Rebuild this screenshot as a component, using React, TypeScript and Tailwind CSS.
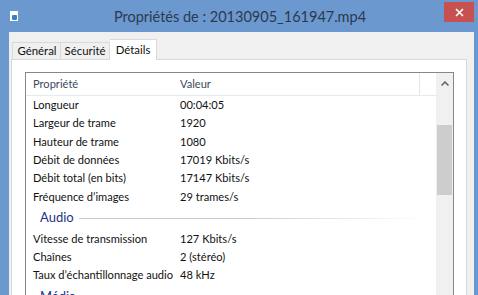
import React from 'react';

const font = { fontFamily: 'Lato, "Open Sans", sans-serif' };

interface Row {
  label: string;
  value: string;
}

const video: Row[] = [
  { label: 'Longueur', value: '00:04:05' },
  { label: 'Largeur de trame', value: '1920' },
  { label: 'Hauteur de trame', value: '1080' },
  { label: 'Débit de données', value: '17019 Kbits/s' },
  { label: 'Débit total (en bits)', value: '17147 Kbits/s' },
  { label: 'Fréquence d’images', value: '29 trames/s' },
];

const audio: Row[] = [
  { label: 'Vitesse de transmission', value: '127 Kbits/s' },
  { label: 'Chaînes', value: '2 (stéréo)' },
  { label: 'Taux d’échantillonnage audio', value: '48 kHz' },
];

const PropRow: React.FC<Row> = ({ label, value }) => (
  <div className="flex h-[18.4px] items-center text-[11.1px] text-[#111]">
    <div className="w-[154px] pl-[7px] whitespace-nowrap">{label}</div>
    <div className="whitespace-nowrap">{value}</div>
  </div>
);

const Group: React.FC<{ name: string }> = ({ name }) => (
  <div className="flex h-[23.4px] items-center pl-[14px] pr-[10px]">
    <span className="text-[13px] text-[#1e3287] whitespace-nowrap">{name}</span>
    <div className="ml-[5px] h-px flex-1 bg-gradient-to-r from-[#c4cfdc] via-[#c4cfdc] to-transparent" />
  </div>
);

export default function App() {
  return (
    <div className="w-[478px] h-[295px] overflow-hidden bg-[#6b98cf] flex flex-col" style={font}>
      {/* Title bar */}
      <div className="relative flex h-[32px] shrink-0 items-center">
        <div className="absolute left-[10px] top-[11px] h-[10px] w-[8px] bg-white flex items-end justify-center pb-[1px]">
          <div className="h-[5px] w-[5px] rounded-[1px] bg-[#3d7fc4]" />
        </div>
        <div className="w-full text-center text-[14.5px] text-[#2b3a4e] pl-[2px] pt-[1px]">
          Propriétés de : 20130905_161947.mp4
        </div>
        <div className="absolute right-[4px] top-[2px] flex h-[20px] w-[30px] items-center justify-center bg-[#c75050]">
          <svg width="9" height="9" viewBox="0 0 9 9">
            <path d="M1 1l7 7M8 1L1 8" stroke="white" strokeWidth="1.6" />
          </svg>
        </div>
      </div>

      {/* Window body */}
      <div className="ml-[9px] mr-[4px] flex-1 bg-[#f0f0f0] pl-[2px] pr-[7px] pt-[7px]">
        {/* Tabs */}
        <div className="flex h-[20px] items-end pl-[1px] text-[11.4px] text-[#111]">
          <div className="flex h-[17px] w-[49px] items-center justify-center border border-b-0 border-[#d9d9d9] bg-[#f0f0f0] pl-[1px]">
            Général
          </div>
          <div className="flex h-[17px] w-[49px] items-center justify-center border border-b-0 border-l-0 border-[#d9d9d9] bg-[#f0f0f0]">
            Sécurité
          </div>
          <div className="relative z-10 -mb-px flex h-[21px] w-[47px] items-start justify-center border border-b-0 border-l-0 border-[#d9d9d9] bg-white pt-[1px]">
            Détails
          </div>
        </div>

        {/* Tab panel */}
        <div className="h-[300px] border border-[#d9d9d9] bg-white pl-[13px] pr-[12px] pt-[12px]">
          <div className="flex h-[260px] border border-[#828790] bg-white">
            <div className="flex-1 min-w-0">
              {/* Header */}
              <div className="flex h-[23px] border-b border-[#e5eaf1] text-[11.1px] text-[#3c4a5e]">
                <div className="flex w-[154px] items-center pl-[7px]">Propriété</div>
                <div className="flex flex-1 items-center">Valeur</div>
                <div className="w-[17px] border-l border-[#e5e5e5]" />
              </div>
              {video.map((r) => (
                <PropRow key={r.label} {...r} />
              ))}
              <Group name="Audio" />
              {audio.map((r) => (
                <PropRow key={r.label} {...r} />
              ))}
              <Group name="Média" />
            </div>

            {/* Scrollbar */}
            <div className="flex w-[17px] flex-col bg-[#f0f0f0]">
              <div className="flex h-[17px] items-center justify-center pt-[3px]">
                <svg width="8" height="5" viewBox="0 0 8 5">
                  <path d="M0.5 4.5L4 1l3.5 3.5" fill="none" stroke="#606060" strokeWidth="1.5" />
                </svg>
              </div>
              <div className="mx-[1px] mt-[35px] h-[70px] bg-[#cdcdcd]" />
            </div>
          </div>
        </div>
      </div>
    </div>
  );
}
